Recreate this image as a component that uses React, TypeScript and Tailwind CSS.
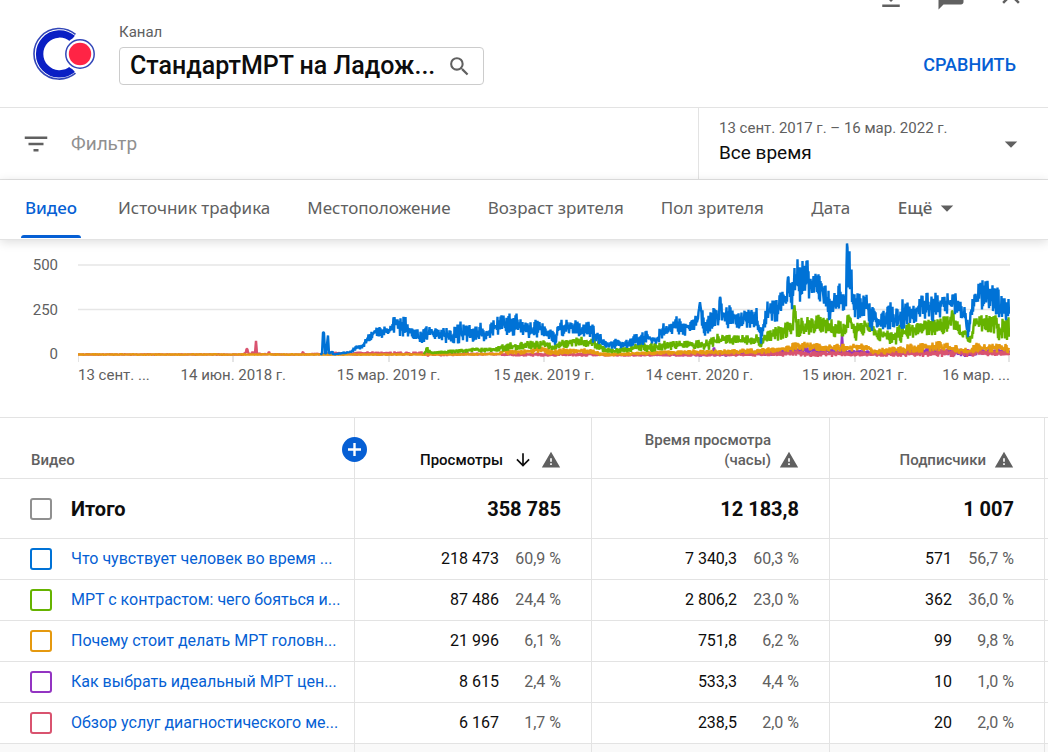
import {
  MdArrowDownward,
  MdArrowDropDown,
  MdClose,
  MdFeedback,
  MdFileDownload,
  MdFilterList,
  MdSearch,
  MdWarning,
} from "react-icons/md";

// [x, top, bottom] of the band the daily values move in
type Band = [number, number, number];

type Series = {
  color: string;
  seed: number;
  bands: Band[];
};

const series: Series[] = [
  {
    color: "#9334c2",
    seed: 11,
    bands: [
      [640, 354, 355], [700, 352, 356], [713, 352, 355], [714, 346, 349], [715, 352, 356],
      [780, 351, 355], [795, 347, 353], [805, 347, 353], [841, 350, 354], [842, 335, 336],
      [843, 350, 354], [880, 351, 355], [930, 348, 354], [966, 350, 356], [985, 349, 354],
      [1009, 349, 354],
    ],
  },
  {
    color: "#d9536f",
    seed: 5,
    bands: [
      [78, 354, 355], [244, 354, 355], [246, 349, 353], [247, 348, 350], [249, 354, 355],
      [253, 351, 354], [255, 353, 354], [256, 340, 341], [257, 353, 355], [260, 353, 355],
      [268, 354, 355], [269, 351, 352], [270, 354, 355], [302, 354, 355], [303, 351, 352],
      [304, 354, 355], [340, 352, 355], [365, 352, 355], [400, 352, 355], [425, 352, 356],
      [480, 353, 355], [520, 353, 356], [560, 353, 356], [640, 354, 356], [740, 353, 356],
      [790, 351, 356], [860, 352, 356], [900, 351, 356], [960, 350, 356], [1009, 351, 355],
    ],
  },
  {
    color: "#e5990f",
    seed: 23,
    bands: [
      [78, 354, 355], [460, 354, 355], [498, 353, 355], [505, 348, 354], [512, 350, 354],
      [530, 350, 354], [540, 346, 352], [552, 349, 355], [575, 349, 353], [590, 349, 353],
      [602, 353, 356], [640, 352, 355], [690, 350, 354], [730, 350, 354], [765, 348, 353],
      [790, 346, 351], [794, 342, 350], [808, 342, 349], [822, 345, 351], [868, 344, 350],
      [873, 350, 354], [900, 346, 353], [940, 342, 350], [956, 346, 352], [968, 349, 354],
      [976, 344, 351], [1009, 345, 352],
    ],
  },
  {
    color: "#66b300",
    seed: 37,
    bands: [
      [424, 353, 354], [427, 347, 352], [431, 352, 354], [450, 350, 353], [475, 348, 352],
      [495, 348, 352], [505, 344, 350], [530, 342, 349], [547, 341, 347], [552, 346, 350],
      [560, 342, 348], [570, 338, 346], [582, 338, 345], [595, 338, 347], [602, 345, 351],
      [612, 349, 353], [628, 347, 352], [640, 342, 350], [652, 344, 351], [665, 342, 349],
      [690, 341, 348], [708, 341, 349], [718, 335, 344], [740, 336, 344], [757, 335, 343],
      [761, 341, 347], [766, 332, 340], [775, 328, 340], [785, 325, 337], [793, 321, 331],
      [794, 306, 308], [795, 306, 312], [797, 322, 338], [803, 316, 333], [810, 321, 333],
      [818, 316, 329], [827, 320, 333], [835, 323, 338], [845, 321, 335], [849, 314, 326],
      [851, 317, 329], [856, 325, 339], [866, 320, 331], [872, 324, 334], [876, 330, 340],
      [885, 329, 341], [895, 328, 343], [906, 323, 338], [918, 323, 334], [930, 321, 333],
      [945, 318, 332], [951, 318, 326], [952, 309, 312], [954, 315, 328], [959, 322, 334],
      [961, 329, 341], [966, 330, 336], [968, 338, 346], [972, 332, 340], [974, 318, 327],
      [985, 317, 333], [995, 316, 332], [1002, 322, 341], [1009, 320, 336],
    ],
  },
  {
    color: "#0072d6",
    seed: 71,
    bands: [
      [321, 354, 355], [322, 353, 354], [323, 332, 333], [324, 332, 333], [325, 353, 354],
      [326, 353, 354], [328, 335, 336], [329, 353, 354], [331, 349, 354], [334, 354, 355],
      [342, 352, 354], [350, 351, 353], [357, 345, 350], [364, 342, 347], [370, 333, 340],
      [377, 328, 337], [384, 328, 338], [390, 328, 333], [394, 318, 331], [400, 321, 335],
      [406, 318, 333], [411, 329, 337], [418, 331, 342], [424, 325, 341], [432, 329, 338],
      [442, 330, 340], [452, 329, 343], [461, 324, 342], [470, 327, 340], [480, 324, 338],
      [487, 331, 341], [494, 321, 334], [504, 316, 331], [514, 317, 335], [519, 316, 334],
      [526, 325, 336], [536, 322, 336], [546, 326, 335], [551, 331, 341], [555, 335, 345],
      [558, 322, 334], [566, 320, 335], [577, 323, 335], [588, 323, 337], [594, 326, 342],
      [601, 336, 346], [608, 343, 349], [616, 340, 348], [625, 341, 348], [634, 336, 345],
      [645, 332, 343], [657, 336, 345], [661, 326, 337], [670, 323, 333], [677, 318, 334],
      [686, 322, 334], [693, 319, 331], [698, 312, 324], [700, 300, 303], [702, 311, 328],
      [706, 320, 335], [712, 311, 327], [719, 309, 326], [720, 295, 298], [722, 308, 320],
      [730, 308, 327], [745, 310, 325], [757, 310, 325], [759, 322, 332], [761, 330, 343],
      [764, 317, 331], [768, 302, 320], [775, 298, 322], [783, 294, 312], [787, 292, 305],
      [788, 274, 279], [790, 280, 303], [792, 292, 307], [794, 266, 300], [796, 258, 285],
      [798, 266, 304], [803, 262, 292], [808, 264, 302], [812, 274, 292], [816, 272, 292],
      [820, 280, 299], [824, 282, 312], [829, 292, 316], [830, 312, 323], [832, 296, 314],
      [839, 286, 311], [845, 295, 310], [846, 290, 304], [847, 243, 244], [848, 243, 300],
      [850, 257, 300], [851, 257, 298], [852, 285, 308], [857, 297, 320], [862, 298, 318],
      [868, 298, 316], [872, 310, 332], [878, 313, 326], [886, 313, 328], [890, 303, 327],
      [895, 313, 328], [903, 302, 325], [912, 306, 322], [919, 302, 317], [926, 292, 315],
      [933, 299, 319], [941, 290, 314], [950, 294, 312], [958, 294, 312], [961, 306, 322],
      [965, 310, 324], [968, 325, 342], [970, 308, 330], [973, 293, 310], [976, 293, 308],
      [980, 281, 306], [986, 282, 308], [995, 280, 308], [999, 294, 320], [1004, 301, 320],
      [1009, 302, 319],
    ],
  },
];

// two points per pixel, swinging across the band with a few outliers
function buildPath({ bands, seed }: Series) {
  let state = seed;
  let segment = 0;
  let upper = false;
  const points: string[] = [];
  const last = bands[bands.length - 1][0];

  for (let x = bands[0][0]; x <= last; x += 0.5) {
    while (segment < bands.length - 2 && x > bands[segment + 1][0]) segment++;
    const [x0, top0, bottom0] = bands[segment];
    const [x1, top1, bottom1] = bands[segment + 1];
    const t = (x - x0) / (x1 - x0);
    const top = top0 + (top1 - top0) * t;
    const bottom = bottom0 + (bottom1 - bottom0) * t;

    state = (state * 16807) % 2147483647;
    const noise = (state / 2147483647) * 0.8 - 0.18;
    const y = top + (bottom - top) * (upper ? noise : 1 - noise);
    upper = !upper;
    points.push(`${x.toFixed(1)} ${y.toFixed(1)}`);
  }

  return `M${points.join("L")}`;
}

const ticks = [78, 233, 389, 544, 699, 855, 1009];

const tabs = [
  "Видео",
  "Источник трафика",
  "Местоположение",
  "Возраст зрителя",
  "Пол зрителя",
  "Дата",
];

const rows = [
  {
    title: "Что чувствует человек во время ...",
    border: "border-[#0072d6]",
    values: [["218 473", "60,9 %"], ["7 340,3", "60,3 %"], ["571", "56,7 %"]],
  },
  {
    title: "МРТ с контрастом: чего бояться и...",
    border: "border-[#66b300]",
    values: [["87 486", "24,4 %"], ["2 806,2", "23,0 %"], ["362", "36,0 %"]],
  },
  {
    title: "Почему стоит делать МРТ головн...",
    border: "border-[#e5990f]",
    values: [["21 996", "6,1 %"], ["751,8", "6,2 %"], ["99", "9,8 %"]],
  },
  {
    title: "Как выбрать идеальный МРТ цен...",
    border: "border-[#9334c2]",
    values: [["8 615", "2,4 %"], ["533,3", "4,4 %"], ["10", "1,0 %"]],
  },
  {
    title: "Обзор услуг диагностического ме...",
    border: "border-[#d9536f]",
    values: [["6 167", "1,7 %"], ["238,5", "2,0 %"], ["20", "2,0 %"]],
  },
];

function ChannelLogo() {
  return (
    <svg width="64" height="56" viewBox="0 0 64 56" fill="none" aria-hidden="true">
      <path d="M43.5 8.4A25.3 25.3 0 1 0 43.5 47.2" stroke="#3246b8" strokeWidth="1.6" />
      <path d="M40.5 12.6A20 20 0 1 0 40.5 43.2" stroke="#0a1fc4" strokeWidth="7.4" />
      <circle cx="48" cy="28" r="17" fill="#fff" />
      <circle cx="48" cy="28" r="14.2" stroke="#3246b8" strokeWidth="1.5" />
      <circle cx="48" cy="28" r="11.2" fill="#ff2445" />
    </svg>
  );
}

function Header() {
  return (
    <header className="flex justify-between overflow-hidden border-b border-[#e3e3e3] pr-[22px] pb-[22px] pl-8">
      <div className="flex gap-[23px] pt-[23px]">
        <div className="pt-[3px]">
          <ChannelLogo />
        </div>
        <div>
          <p className="text-[15px] leading-[18px] text-[#606060]">Канал</p>
          <button
            type="button"
            className="mt-[6px] flex h-[38px] w-[365px] items-center justify-between rounded border border-[#ccc] pr-[11px] pl-[10px] text-[25px] font-medium text-[#0d0d0d]"
          >
            СтандартМРТ на Ладож...
            <MdSearch size={25} className="text-[#606060]" />
          </button>
        </div>
      </div>

      <div className="flex flex-col items-end">
        <div className="-mt-[18px] flex h-[30px] gap-[30px] text-[#606060]">
          <button type="button" aria-label="Скачать">
            <MdFileDownload size={30} />
          </button>
          <button type="button" aria-label="Отправить отзыв">
            <MdFeedback size={30} />
          </button>
          <button type="button" aria-label="Закрыть" className="-mt-1">
            <MdClose size={30} />
          </button>
        </div>
        <button type="button" className="mt-[41px] mr-[10px] text-[18px] leading-6 font-medium text-[#065fd4]">
          СРАВНИТЬ
        </button>
      </div>
    </header>
  );
}

function FilterBar() {
  return (
    <div className="flex border-b border-[#e3e3e3]">
      <label className="flex flex-1 items-center gap-5 pl-[21px]">
        <MdFilterList size={30} className="shrink-0 text-[#606060]" />
        <input
          type="text"
          aria-label="Фильтр"
          placeholder="Фильтр"
          className="w-full pt-[2px] text-[19px] outline-none placeholder:text-[#909090]"
        />
      </label>
      <button
        type="button"
        className="flex w-[350px] items-center justify-between border-l border-[#e3e3e3] py-[10px] pr-[22px] pl-5 text-left"
      >
        <span>
          <span className="block text-[15px] leading-5 text-[#606060]">13 сент. 2017 г. – 16 мар. 2022 г.</span>
          <span className="block pb-[2px] text-[19px] leading-[29px] text-[#0d0d0d]">Все время</span>
        </span>
        <MdArrowDropDown size={30} className="text-[#606060]" />
      </button>
    </div>
  );
}

function Tabs() {
  return (
    <nav className="relative z-10 flex gap-[37px] border-b border-[#e3e3e3] pl-[21px] font-['Noto_Sans',sans-serif] text-[17px] text-[#606060] shadow-[0_2px_10px_rgba(0,0,0,0.14)]">
      {tabs.map((tab, index) => (
        <button
          key={tab}
          type="button"
          className={
            index === 0
              ? "relative h-[59px] min-w-[60px] pb-1 font-medium text-[#065fd4]"
              : "h-[59px] min-w-[60px] pb-1"
          }
        >
          {tab}
          {index === 0 && <span className="absolute inset-x-0 bottom-px h-[3px] rounded-t bg-[#065fd4]" />}
        </button>
      ))}
      <button type="button" className="flex h-[55px] items-center font-medium">
        Ещё
        <MdArrowDropDown size={30} />
      </button>
    </nav>
  );
}

function Chart() {
  return (
    <section className="pr-[38px] pb-8 pl-5 text-[15px] leading-5 text-[#606060]">
      <div className="flex gap-5">
        <div className="flex h-[124px] w-[38px] flex-col justify-between pt-[15px] text-right">
          <span>500</span>
          <span>250</span>
          <span>0</span>
        </div>
        <svg
          viewBox="78 240 932 123"
          preserveAspectRatio="none"
          className="h-[123px] min-w-0 flex-1"
          role="img"
          aria-label="Просмотры"
        >
          <path d="M78 265H1010M78 309.5H1010M78 354.5H1010" stroke="#e6e6e6" strokeWidth="1.5" />
          {ticks.map((x) => (
            <path key={x} d={`M${x} 355V362`} stroke="#dcdcdc" strokeWidth="1.5" />
          ))}
          {series.map((item) => (
            <path
              key={item.color}
              d={buildPath(item)}
              fill="none"
              stroke={item.color}
              strokeWidth="2.4"
              strokeLinejoin="bevel"
            />
          ))}
        </svg>
      </div>
      <div className="ml-[58px] grid grid-cols-12 pt-px text-center whitespace-nowrap">
        <span className="text-left">13 сент. ...</span>
        <span className="col-span-2">14 июн. 2018 г.</span>
        <span className="col-span-2">15 мар. 2019 г.</span>
        <span className="col-span-2">15 дек. 2019 г.</span>
        <span className="col-span-2">14 сент. 2020 г.</span>
        <span className="col-span-2">15 июн. 2021 г.</span>
        <span className="text-right">16 мар. ...</span>
      </div>
    </section>
  );
}

function VideoTable() {
  const head = "border-r border-b border-[#e3e3e3] pr-[30px] pb-2 text-right align-bottom font-medium";
  const cell = "border-r border-b border-[#e3e3e3] pr-[30px] text-right";

  return (
    <table className="w-full table-fixed border-separate border-spacing-0 border-t border-[#e3e3e3] text-[#0d0d0d]">
      <colgroup>
        <col />
        <col className="w-[237px]" />
        <col className="w-[238px]" />
        <col className="w-[215px]" />
        <col className="w-[3px]" />
      </colgroup>
      <thead className="text-[15px] leading-5 text-[#606060]">
        <tr className="h-[61px]">
          <th className="relative border-r border-b border-[#e3e3e3] pb-2 pl-[31px] text-left align-bottom font-medium">
            Видео
            <button
              type="button"
              aria-label="Добавить показатель"
              className="absolute top-[19px] -right-[13px] flex h-[25px] w-[25px] items-center justify-center rounded-full bg-[#065fd4]"
            >
              <svg width="13" height="13" viewBox="0 0 13 13" aria-hidden="true">
                <path d="M6.5 0V13M0 6.5H13" stroke="#fff" strokeWidth="2.4" />
              </svg>
            </button>
          </th>
          <th className={head}>
            <span className="flex items-center justify-end">
              <button type="button" className="flex items-center gap-[10px] text-[#0d0d0d]">
                Просмотры
                <MdArrowDownward size={20} />
              </button>
              <MdWarning size={20} className="ml-2" />
            </span>
          </th>
          <th className={head}>
            <span className="flex items-end justify-end gap-2">
              <button type="button" className="text-right">
                Время просмотра
                <br />
                (часы)
              </button>
              <MdWarning size={20} />
            </span>
          </th>
          <th className={head}>
            <span className="flex items-center justify-end gap-2">
              <button type="button">Подписчики</button>
              <MdWarning size={20} />
            </span>
          </th>
          <th className="border-b border-[#e3e3e3]" />
        </tr>
      </thead>
      <tbody className="text-[16px]">
        <tr className="h-[60px] text-[20px] font-bold">
          <td className="border-r border-b border-[#e3e3e3] pl-[30px]">
            <label className="flex items-center gap-[19px]">
              <input
                type="checkbox"
                className="h-[22px] w-[22px] appearance-none rounded-[3px] border-2 border-[#909090]"
              />
              Итого
            </label>
          </td>
          <td className={cell}>358 785</td>
          <td className={cell}>12 183,8</td>
          <td className={cell}>1 007</td>
          <td className="border-b border-[#e3e3e3]" />
        </tr>
        {rows.map((row) => (
          <tr key={row.title} className="h-[41px]">
            <td className="border-r border-b border-[#e3e3e3] pl-[30px]">
              <div className="flex items-center gap-[19px]">
                <input
                  type="checkbox"
                  aria-label={row.title}
                  className={`h-[22px] w-[22px] shrink-0 appearance-none rounded-[3px] border-2 ${row.border}`}
                />
                <a href="#" className="whitespace-nowrap text-[#065fd4]">
                  {row.title}
                </a>
              </div>
            </td>
            {row.values.map(([value, share], index) => (
              <td key={index} className={cell}>
                <div className="flex justify-end">
                  {value}
                  <span className="w-[62px] text-[#606060]">{share}</span>
                </div>
              </td>
            ))}
            <td className="border-b border-[#e3e3e3]" />
          </tr>
        ))}
        <tr className="h-2 bg-[#f9f9f9]">
          <td className="border-r border-[#e3e3e3]" />
          <td className="border-r border-[#e3e3e3]" />
          <td className="border-r border-[#e3e3e3]" />
          <td className="border-r border-[#e3e3e3]" />
          <td />
        </tr>
      </tbody>
    </table>
  );
}

export default function App() {
  return (
    <main className="min-h-screen overflow-hidden bg-white font-[Roboto,sans-serif]">
      <Header />
      <FilterBar />
      <Tabs />
      <Chart />
      <VideoTable />
    </main>
  );
}
